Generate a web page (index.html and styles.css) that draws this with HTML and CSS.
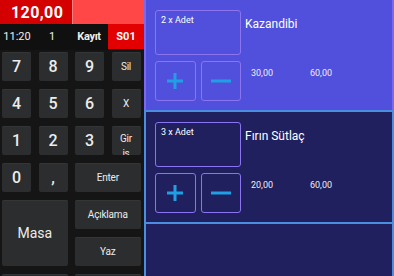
FILE: index.html
```html
<!DOCTYPE html>
<html lang="tr">
<head>
<meta charset="utf-8">
<title>Adisyon</title>
<link rel="stylesheet" href="styles.css">
</head>
<body>
<div class="app">
  <aside class="pad">
    <div class="total"><span class="amount">120,00</span><span class="total-fill"></span></div>
    <div class="info">
      <span>11:20</span><span>1</span><span class="bold">Kayıt</span><span class="table">S01</span>
    </div>
    <div class="keys">
      <button class="key num">7</button>
      <button class="key num">8</button>
      <button class="key num">9</button>
      <button class="key small">Sil</button>
      <button class="key num">4</button>
      <button class="key num">5</button>
      <button class="key num">6</button>
      <button class="key small">X</button>
      <button class="key num">1</button>
      <button class="key num">2</button>
      <button class="key num">3</button>
      <button class="key small wrap">Gir<br>iş</button>
      <button class="key num">0</button>
      <button class="key num">,</button>
      <button class="key small span2">Enter</button>
      <button class="key masa">Masa</button>
      <button class="key small span2">Açıklama</button>
      <button class="key small span2">Yaz</button>
      <button class="key small span2"></button>
      <button class="key small span2"></button>
    </div>
  </aside>
  <main class="list">
    <section class="item selected">
      <div class="controls">
        <div class="qty">2 x Adet</div>
        <div class="steps">
          <button class="step"><svg width="18" height="18" viewBox="0 0 18 18"><path d="M9 1v16M1 9h16" stroke="#1f9fe4" stroke-width="3" fill="none"/></svg></button>
          <button class="step"><svg width="22" height="18" viewBox="0 0 22 18"><path d="M1 9h20" stroke="#1f9fe4" stroke-width="3" fill="none"/></svg></button>
        </div>
      </div>
      <div class="details">
        <div class="name">Kazandibi</div>
        <div class="prices"><span class="unit">30,00</span><span>60,00</span></div>
      </div>
    </section>
    <section class="item">
      <div class="controls">
        <div class="qty">3 x Adet</div>
        <div class="steps">
          <button class="step"><svg width="18" height="18" viewBox="0 0 18 18"><path d="M9 1v16M1 9h16" stroke="#1f9fe4" stroke-width="3" fill="none"/></svg></button>
          <button class="step"><svg width="22" height="18" viewBox="0 0 22 18"><path d="M1 9h20" stroke="#1f9fe4" stroke-width="3" fill="none"/></svg></button>
        </div>
      </div>
      <div class="details">
        <div class="name">Fırın Sütlaç</div>
        <div class="prices"><span class="unit">20,00</span><span>60,00</span></div>
      </div>
    </section>
    <section class="item empty"></section>
  </main>
</div>
</body>
</html>
```

FILE: styles.css
```css
* { box-sizing: border-box; }
html, body { margin: 0; padding: 0; }
body {
  width: 394px;
  height: 276px;
  overflow: hidden;
  background: #20205e;
  font-family: Roboto, "Noto Sans", sans-serif;
  color: #fff;
}
.app {
  display: flex;
  height: 276px;
}
.pad {
  width: 144px;
  flex: none;
  background: #151515;
  overflow: hidden;
}
.total {
  display: flex;
  height: 24px;
}
.amount {
  width: 72px;
  background: #d40000;
  font-weight: 700;
  font-size: 16px;
  letter-spacing: 0.4px;
  line-height: 25px;
  padding-left: 11px;
  color: #fff;
}
.total-fill {
  flex: 1;
  background: #ff4747;
  border-left: 1px solid #ff8080;
}
.info {
  display: grid;
  grid-template-columns: 34px 36px 38px 36px;
  height: 26px;
  background: #101010;
  font-size: 11px;
  align-items: center;
  text-align: center;
  color: #eee;
}
.info span { line-height: 26px; }
.info .bold { font-weight: 700; letter-spacing: -0.3px; }
.info .table {
  background: #e20000;
  font-weight: 700;
  color: #fff;
  height: 25px;
  align-self: start;
  line-height: 25px;
}
.keys {
  display: grid;
  grid-template-columns: repeat(4, 29px);
  grid-auto-rows: 29px;
  column-gap: 7.5px;
  row-gap: 8px;
  padding: 2px 0 0 2px;
}
.key {
  background: #2b2d2e;
  border: none;
  border-radius: 2px;
  color: #ececec;
  font-family: Roboto, sans-serif;
  padding: 0;
  box-shadow: inset 0 1px 0 #333637;
  overflow: hidden;
}
.num { font-size: 16px; font-weight: 500; }
.small { font-size: 10px; letter-spacing: -0.2px; }
.wrap { line-height: 15px; padding-top: 5px; display: block; }
.span2 { grid-column: span 2; }
.masa {
  grid-column: span 2;
  grid-row: span 2;
  font-size: 14px;
}
.list {
  flex: 1;
  display: flex;
  flex-direction: column;
  margin-top: -2px;
}
.item {
  border: 2px solid #4a8ee0;
  border-bottom: none;
  background: #20205e;
  padding: 10px 9px 9px;
  display: flex;
  flex: none;
}
.item.selected {
  background: #5050dc;
  border-color: #7b68ee;
}
.item.empty { flex: 1; }
.controls {
  width: 86px;
  display: flex;
  flex-direction: column;
  gap: 6px;
}
.qty {
  height: 45px;
  border: 1px solid #8a74f2;
  border-radius: 3px;
  font-size: 9px;
  padding: 4px 5px;
  color: #fff;
}
.steps {
  display: flex;
  gap: 5px;
}
.step {
  height: 40px;
  flex: 1;
  background: transparent;
  border: 1px solid #8a74f2;
  border-radius: 3px;
  display: flex;
  align-items: center;
  justify-content: center;
  padding: 0;
}
.details {
  margin-left: 4px;
  display: flex;
  flex-direction: column;
}
.name {
  font-size: 12px;
  line-height: 14px;
  margin-top: 7px;
}
.prices {
  margin-top: 37px;
  margin-left: 6px;
  font-size: 9px;
  color: #eee;
  display: flex;
}
.unit { width: 59px; }
```
